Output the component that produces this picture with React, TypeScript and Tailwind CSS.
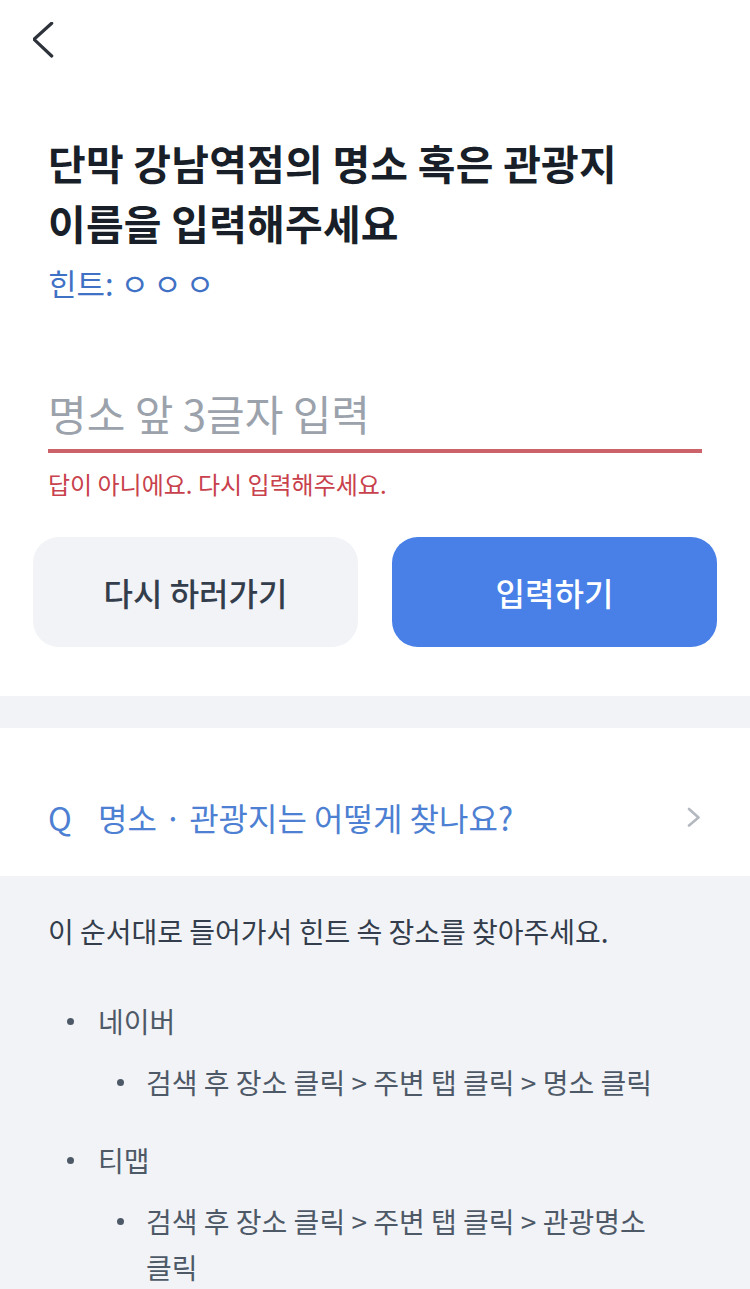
const font = { fontFamily: '"Noto Sans CJK KR", "Noto Sans", sans-serif' };

const steps = [
  { app: "네이버", path: "검색 후 장소 클릭 > 주변 탭 클릭 > 명소 클릭" },
  { app: "티맵", path: "검색 후 장소 클릭 > 주변 탭 클릭 > 관광명소 클릭" },
];

export default function App() {
  return (
    <div className="min-h-[1289px] w-[750px] bg-[#f2f3f6]" style={font}>
      {/* Quiz card */}
      <section className="bg-white pb-[49px]">
        <div className="h-[80px] pl-[33px] pt-[22px]">
          <svg width="22" height="36" viewBox="0 0 22 36" fill="none">
            <path d="M18.7 1.3 1 17.3l17.7 16.7" stroke="#2e333b" strokeWidth="3.2" strokeLinecap="round" strokeLinejoin="round" />
          </svg>
        </div>

        <div className="px-[48px] pt-[52px]">
          <h1 className="text-[41px] font-bold leading-[60px] tracking-[0.2px] text-[#191f28]">
            단막 강남역점의 명소 혹은 관광지
            <br />
            이름을 입력해주세요
          </h1>
          <p className="mt-[11px] text-[31px] leading-[40px] text-[#3f71c4]">
            힌트: <span className="tracking-[4px]">ㅇㅇㅇ</span>
          </p>

          <div className="mt-[85px] border-b-[4px] border-[#cc626a] pb-[11px]">
            <input
              className="h-[50px] w-full bg-transparent text-[42px] leading-[50px] text-[#191f28] outline-none placeholder:text-[#9ba2ab]"
              placeholder="명소 앞 3글자 입력"
              style={font}
            />
          </div>
          <p className="mt-[16px] text-[24px] leading-[30px] text-[#c8414c]">답이 아니에요. 다시 입력해주세요.</p>
        </div>

        <div className="mt-[38px] grid grid-cols-2 gap-[34px] px-[33px]">
          <button className="h-[110px] rounded-[26px] bg-[#f2f3f6] text-[32px] font-medium text-[#333d4b]" style={font}>
            다시 하러가기
          </button>
          <button className="h-[110px] rounded-[26px] bg-[#4880e8] text-[32px] font-medium text-white" style={font}>
            입력하기
          </button>
        </div>
      </section>

      {/* FAQ */}
      <div className="mt-[32px] bg-white">
        <div className="flex items-center justify-between pb-[40px] pl-[48px] pr-[49px] pt-[70px]">
          <div className="flex items-center text-[32px] leading-[38px] text-[#4d80d2]">
            <span className="w-[50px]">Q</span>
            <span>명소 · 관광지는 어떻게 찾나요?</span>
          </div>
          <svg width="14" height="20" viewBox="0 0 14 20" fill="none">
            <path d="M2 2l9.5 8.5L2 18.5" stroke="#b4b9c0" strokeWidth="2.6" strokeLinecap="round" strokeLinejoin="round" />
          </svg>
        </div>
      </div>

      <div className="break-keep pl-[48px] pr-[70px] pt-[32px] pb-[10px] text-[28px] leading-[46px]">
        <p className="text-[#333d4b]">이 순서대로 들어가서 힌트 속 장소를 찾아주세요.</p>
        <ul className="mt-[44px] text-[#4e5968]">
          {steps.map((s, i) => (
            <li key={s.app} className={i > 0 ? "mt-[32px]" : ""}>
              <div className="flex">
                <span className="flex w-[50px] items-center pl-[19px]">
                  <span className="h-[7px] w-[7px] rounded-full bg-[#4e5968]" />
                </span>
                <span>{s.app}</span>
              </div>
              <div className="mt-[15px] flex pl-[48px]">
                <span className="flex h-[46px] w-[50px] shrink-0 items-center pl-[21px]">
                  <span className="h-[7px] w-[7px] rounded-full bg-[#4e5968]" />
                </span>
                <span>{s.path}</span>
              </div>
            </li>
          ))}
        </ul>
      </div>
    </div>
  );
}
